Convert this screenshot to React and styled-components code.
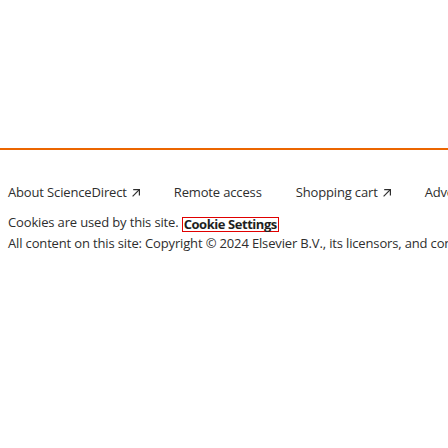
import React from "react";
import styled, { createGlobalStyle } from "styled-components";

const Global = createGlobalStyle`
  html, body { margin: 0; padding: 0; background: #fff; overflow: hidden; }
  body { font-family: "Open Sans", "Noto Sans", sans-serif; color: #2e2e2e; }
`;

const Page = styled.div`
  width: 448px;
  height: 448px;
  overflow: hidden;
  display: flex;
  flex-direction: column;
`;

const Content = styled.main`
  height: 148px;
  flex: none;
`;

const Footer = styled.footer`
  border-top: 2px solid #eb6500;
  padding: 32px 8px 0;
  font-size: 13px;
  letter-spacing: -0.15px;
  white-space: nowrap;
`;

const LinkRow = styled.ul`
  list-style: none;
  margin: 0 0 10px;
  padding: 0;
  display: flex;
  gap: 34px;
  line-height: 20px;
`;

const LinkItem = styled.li`
  flex: none;
`;

const FooterLink = styled.a`
  color: #2e2e2e;
  text-decoration: none;
  display: inline-flex;
  align-items: baseline;
  gap: 5px;
`;

const ArrowSvg = styled.svg`
  width: 8px;
  height: 8px;
  flex: none;
  align-self: center;
  position: relative;
  top: 1px;
`;

const Line = styled.p`
  margin: 0;
  line-height: 21px;
`;

const CookieButton = styled.button`
  font: inherit;
  letter-spacing: -0.45px;
  font-weight: 700;
  color: #1f1f1f;
  background: none;
  border: 1px solid #e00000;
  padding: 0 1px;
  margin: 0;
  line-height: 13px;
  display: inline-block;
  vertical-align: -2px;
  cursor: pointer;
`;

const Arrow = () => (
  <ArrowSvg viewBox="0 0 8 8" fill="none" stroke="currentColor" strokeWidth="1.2">
    <path d="M0.6 7.4 L7.3 0.7" />
    <path d="M1.2 0.6 H7.4 V6.6" />
  </ArrowSvg>
);

const links = [
  { label: "About ScienceDirect", ext: true },
  { label: "Remote access" },
  { label: "Shopping cart", ext: true },
  { label: "Advertise" },
  { label: "Contact and support" },
  { label: "Terms and conditions" },
  { label: "Privacy policy" },
];

export default function App() {
  return (
    <Page>
      <Global />
      <Content />
      <Footer>
        <LinkRow>
          {links.map((l) => (
            <LinkItem key={l.label}>
              <FooterLink href="#">
                {l.label}
                {l.ext && <Arrow />}
              </FooterLink>
            </LinkItem>
          ))}
        </LinkRow>
        <Line>
          Cookies are used by this site. <CookieButton>Cookie Settings</CookieButton>
        </Line>
        <Line>
          All content on this site: Copyright © 2024 Elsevier B.V., its licensors, and contributors. All rights are reserved, including those for text and data mining, AI training, and similar technologies.
        </Line>
      </Footer>
    </Page>
  );
}
